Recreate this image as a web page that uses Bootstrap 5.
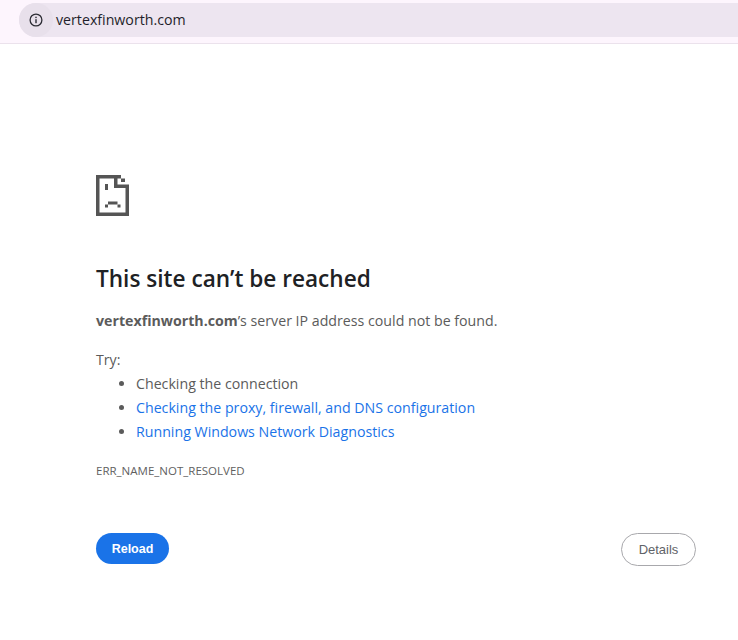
<!DOCTYPE html>
<html lang="en">
<head>
  <meta charset="UTF-8" />
  <meta name="viewport" content="width=device-width, initial-scale=1" />
  <title>vertexfinworth.com</title>
  <link href="https://cdn.jsdelivr.net/npm/bootstrap@5.3.3/dist/css/bootstrap.min.css" rel="stylesheet" />
  <style>
    body {
      background: #fff;
      color: #5b5b5b;
      font-family: "Open Sans", "Noto Sans", sans-serif;
      font-size: 14.2px;
      overflow: hidden;
    }
    .top-strip {
      background: #fdf5fd;
      height: 44px;
      padding: 3px 0 6px 19px;
      border-bottom: 1px solid #ebe2ec;
    }
    .address-pill {
      background: #ede5f0;
      height: 34px;
      border-radius: 17px 0 0 17px;
    }
    .info-chip {
      width: 34px;
      height: 34px;
      border-radius: 50%;
      background: #e8e0eb;
    }
    .address-text {
      color: #1f1f2b;
      font-size: 14.2px;
      margin: -1px 0 0 3px;
    }
    .error-page {
      padding: 131px 42px 0 96px;
    }
    .sad-page {
      display: block;
      width: 33px;
      height: 41px;
    }
    .error-title {
      color: #202124;
      font-size: 22.6px;
      font-weight: 600;
      line-height: 30px;
      margin: 48px 0 0;
    }
    .summary-line {
      line-height: 20px;
      margin: 17px 0 0;
    }
    .summary-line strong { font-weight: 700; }
    .try-label {
      line-height: 20px;
      margin: 19px 0 0;
    }
    .try-list {
      line-height: 24px;
      margin: 2px 0 0;
      padding-left: 40px;
    }
    .try-list a {
      color: #1a73e8;
      text-decoration: none;
    }
    .error-code {
      color: #5f5f5f;
      font-size: 11.5px;
      line-height: 16px;
      margin: 19px 0 0;
    }
    .action-row { margin-top: 54px; }
    .btn-reload, .btn-details {
      font-family: "Liberation Sans", Arial, sans-serif;
      font-size: 13px;
      font-weight: 400;
      line-height: 16px;
      border-radius: 17px;
    }
    .btn-reload {
      background: #1a73e8;
      border: 0;
      color: #fff;
      font-size: 12.5px;
      font-weight: 700;
      width: 73px;
      height: 31px;
      padding: 0;
    }
    .btn-details {
      background: #fff;
      border: 1px solid #a8a8ac;
      color: #5f6368;
      width: 75px;
      height: 33px;
      padding: 0;
    }
  </style>
</head>
<body>

  <!-- browser address bar -->
  <div class="top-strip">
    <div class="address-pill d-flex align-items-center">
      <div class="info-chip d-flex align-items-center justify-content-center">
        <svg width="14" height="14" viewBox="0 0 14 14" fill="none">
          <circle cx="7" cy="7" r="5.9" stroke="#2c2c34" stroke-width="1.3"/>
          <rect x="6.3" y="6.2" width="1.4" height="4" fill="#2c2c34"/>
          <rect x="6.3" y="3.7" width="1.4" height="1.4" fill="#2c2c34"/>
        </svg>
      </div>
      <span class="address-text">vertexfinworth.com</span>
    </div>
  </div>

  <!-- error content -->
  <div class="error-page">
    <svg class="sad-page" viewBox="0 0 33 41" fill="#555">
      <rect x="0" y="0" width="3.5" height="41"/>
      <rect x="0" y="0" width="25" height="3.5"/>
      <rect x="0" y="37.5" width="33" height="3.5"/>
      <rect x="29.5" y="13" width="3.5" height="28"/>
      <rect x="18" y="0" width="3.5" height="13"/>
      <rect x="18" y="9.5" width="15" height="3.5"/>
      <rect x="25" y="3.5" width="4" height="3.5"/>
      <rect x="9" y="9" width="3" height="6"/>
      <rect x="12" y="26.5" width="9.5" height="3"/>
      <rect x="9" y="29.5" width="3" height="3"/>
      <rect x="21.5" y="29.5" width="3" height="3"/>
    </svg>

    <h1 class="error-title">This site can’t be reached</h1>
    <p class="summary-line"><strong>vertexfinworth.com</strong>’s server IP address could not be found.</p>
    <p class="try-label">Try:</p>
    <ul class="try-list">
      <li>Checking the connection</li>
      <li><a href="#">Checking the proxy, firewall, and DNS configuration</a></li>
      <li><a href="#">Running Windows Network Diagnostics</a></li>
    </ul>
    <div class="error-code">ERR_NAME_NOT_RESOLVED</div>

    <div class="action-row d-flex justify-content-between align-items-start">
      <button class="btn btn-reload">Reload</button>
      <button class="btn btn-details">Details</button>
    </div>
  </div>

  <script src="https://cdn.jsdelivr.net/npm/bootstrap@5.3.3/dist/js/bootstrap.bundle.min.js"></script>
</body>
</html>
